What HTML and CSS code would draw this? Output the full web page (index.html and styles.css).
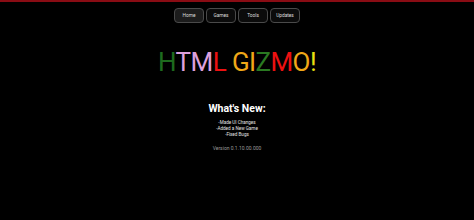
FILE: index.html
```
<!DOCTYPE html>
<html lang="en">
<head>
	<meta charset="UTF-8">
	<title>HTML Gizmo</title>
	<link rel="stylesheet" href="styles.css">
</head>
<body>
	<div class="topbar"></div>
	<div class="nav">
		<a class="btn current" href="#">Home</a>
		<a class="btn" href="#">Games</a>
		<a class="btn" href="#">Tools</a>
		<a class="btn" href="#">Updates</a>
	</div>
	<h1 class="title">
		<span class="c1">H</span><span class="c2">T</span><span class="c2">M</span><span class="c3">L</span>
		<span class="c4">G</span><span class="c4">I</span><span class="c1b">Z</span><span class="c3">M</span><span class="c4">O</span><span class="c5">!</span>
	</h1>
	<div class="news">
		<h2>What's New:</h2>
		<p>-Made UI Changes</p>
		<p>-Added a New Game</p>
		<p>-Fixed Bugs</p>
		<p class="version">Version 0.1.10.00.000</p>
	</div>
</body>
</html>
```
FILE: styles.css
```
* {
	margin: 0;
	padding: 0;
}
body {
	background-color: #000;
	color: #fff;
	font-family: Roboto, "Liberation Sans", sans-serif;
	text-align: center;
}
.topbar {
	height: 2px;
	background-color: #8a0c14;
}
.nav {
	display: flex;
	justify-content: center;
	gap: 2px;
	margin-top: 6px;
}
.btn {
	display: block;
	width: 28px;
	height: 13px;
	line-height: 13px;
	border: 1px solid #4a4a4a;
	border-radius: 4px;
	background-color: #0b0b0b;
	color: #ddd;
	font-size: 4.8px;
	text-decoration: none;
}
.btn.current {
	background-color: #1c1c1c;
}
.title {
	margin-top: 24px;
	font-size: 26px;
	font-weight: 400;
	line-height: 30px;
	letter-spacing: -0.6px;
}
.c1 { color: #1e6b1e; }
.c1b { color: #2a7a22; }
.c2 { color: #dda0dd; }
.c3 { color: #ee1111; }
.c4 { color: #f0a818; }
.c5 { color: #e8e010; }
.news {
	margin-top: 25px;
}
.news h2 {
	font-size: 10.5px;
	font-weight: 700;
	line-height: 13px;
	margin-bottom: 5px;
}
.news p {
	font-size: 4.6px;
	line-height: 6px;
	color: #e4e4e4;
}
.news .version {
	margin-top: 7px;
	font-size: 5px;
	color: #999;
}
```
